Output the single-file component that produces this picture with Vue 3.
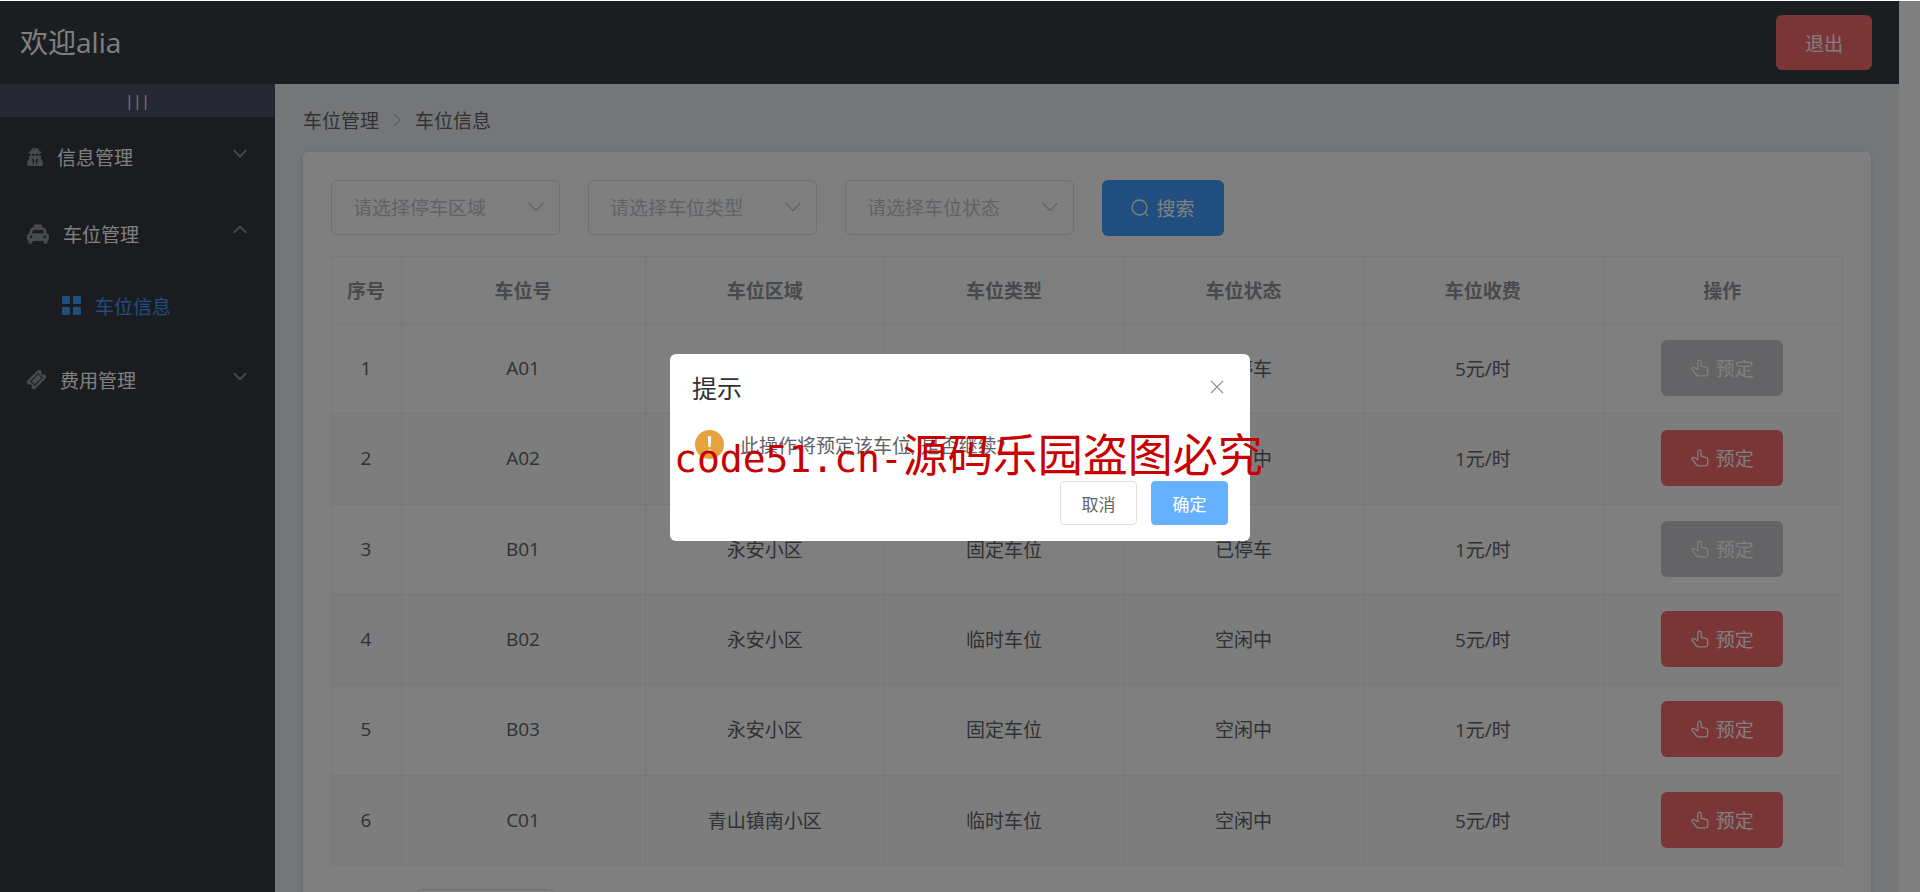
<script setup>
import { ref } from 'vue'

const columns = ['序号', '车位号', '车位区域', '车位类型', '车位状态', '车位收费', '操作']
const rows = [
  { id: 1, no: 'A01', area: '永安小区', type: '固定车位', state: '已停车', fee: '5元/时' },
  { id: 2, no: 'A02', area: '永安小区', type: '临时车位', state: '空闲中', fee: '1元/时' },
  { id: 3, no: 'B01', area: '永安小区', type: '固定车位', state: '已停车', fee: '1元/时' },
  { id: 4, no: 'B02', area: '永安小区', type: '临时车位', state: '空闲中', fee: '5元/时' },
  { id: 5, no: 'B03', area: '永安小区', type: '固定车位', state: '空闲中', fee: '1元/时' },
  { id: 6, no: 'C01', area: '青山镇南小区', type: '临时车位', state: '空闲中', fee: '5元/时' },
]
const filters = [
  { key: 'area', label: '请选择停车区域' },
  { key: 'type', label: '请选择车位类型' },
  { key: 'state', label: '请选择车位状态' },
]
const open = ref(true)
const collapsed = ref(false)
</script>

<template>
  <div class="page">
    <div class="app">
      <header class="header">
        <span class="welcome">欢迎alia</span>
        <button class="btn danger logout" type="button">退出</button>
      </header>
      <div class="body">
        <aside class="side">
          <button class="toggle" type="button" @click="collapsed = !collapsed">|||</button>
          <nav class="menu">
            <a class="item" href="#">
              <svg class="mi" width="16" height="18" viewBox="0 0 448 512" fill="currentColor">
                <path d="M383.900 308.300l23.900-62.600c4-10.500-3.700-21.700-15-21.700h-58.500c11-18.900 17.800-40.600 17.800-64v-.3c39.200-7.800 64-19.100 64-31.700 0-13.300-27.300-25.100-70.100-33-9.200-32.800-27-65.800-40.600-82.800-9.500-11.900-25.900-15.600-39.500-8.800l-27.600 13.800c-9 4.500-19.600 4.500-28.600 0L182.100 3.400c-13.600-6.800-30-3.100-39.500 8.800-13.500 17-31.400 50-40.600 82.800-42.700 7.900-70 19.700-70 33 0 12.600 24.800 23.900 64 31.700v.3c0 23.400 6.800 45.100 17.800 64H56.300c-11.500 0-19.200 11.700-14.700 22.300l25.800 60.200C27.300 329.800 0 372.700 0 422.400v44.800C0 491.900 20.100 512 44.800 512h358.400c24.700 0 44.800-20.100 44.800-44.800v-44.800c0-48.400-25.800-90.400-64.100-114.100zM176 480l-41.600-192 49.600 32 24 40-32 120zm96 0l-32-120 24-40 49.600-32L272 480zm41.700-298.500c-3.900 11.900-7 24.600-16.500 33.400-10.100 9.300-48 22.400-64-25-2.800-8.400-15.400-8.400-18.300 0-17 50.200-56 32.400-64 25-9.500-8.800-12.700-21.500-16.500-33.400-.8-2.500-6.300-5.700-6.300-5.800v-10.800c28.300 3.600 61 5.800 96 5.800s67.700-2.100 96-5.800v10.800c-.1.100-5.600 3.200-6.400 5.800z" />
              </svg>
              <span>信息管理</span>
              <svg class="arrow" viewBox="0 0 14 14"><path d="M1.500 4.500 7 10l5.500-5.500" /></svg>
            </a>
            <a class="item" href="#">
              <svg class="mi" width="22" height="22" viewBox="0 0 512 512" fill="currentColor">
                <path d="M462 241.640l-22-84.840c-9.600-35.200-41.600-60.800-76.800-60.800H352V64c0-17.670-14.330-32-32-32H192c-17.670 0-32 14.330-32 32v32h-11.200c-35.200 0-67.200 25.600-76.800 60.800l-22 84.840C21.410 248.040 0 273.470 0 304v48c0 23.630 12.950 44.040 32 55.120V448c0 17.670 14.330 32 32 32h32c17.670 0 32-14.330 32-32v-32h256v32c0 17.670 14.330 32 32 32h32c17.670 0 32-14.330 32-32v-40.880c19.050-11.090 32-31.500 32-55.120v-48c0-30.530-21.410-55.960-50-62.360zM96 352c-17.670 0-32-14.330-32-32s14.330-32 32-32 32 14.330 32 32-14.330 32-32 32zm20.550-112l17.200-66.360c2.230-8.160 9.590-13.640 15.060-13.640h214.400c5.470 0 12.830 5.480 14.850 12.860L395.480 240H116.550zM416 352c-17.670 0-32-14.330-32-32s14.330-32 32-32 32 14.330 32 32-14.330 32-32 32z" />
              </svg>
              <span>车位管理</span>
              <svg class="arrow" viewBox="0 0 14 14"><path d="M1.500 9.500 7 4l5.500 5.500" /></svg>
            </a>
            <a class="item sub" href="#">
              <svg class="mi" width="19" height="19" viewBox="0 0 19 19" fill="currentColor">
                <rect width="8" height="8" rx="1" /><rect x="11" width="8" height="8" rx="1" />
                <rect y="11" width="8" height="8" rx="1" /><rect x="11" y="11" width="8" height="8" rx="1" />
              </svg>
              <span>车位信息</span>
            </a>
            <a class="item" href="#">
              <svg class="mi" width="19" height="19" viewBox="0 0 20 20">
                <g transform="rotate(-45 10 10)">
                  <path fill="currentColor" fill-rule="evenodd" d="M0 4h20v4a2 2 0 0 0 0 4v4H0v-4a2 2 0 0 0 0-4zM4 6.500v7h12v-7zM5 7.500h10v5H5z" />
                </g>
              </svg>
              <span>费用管理</span>
              <svg class="arrow" viewBox="0 0 14 14"><path d="M1.500 4.500 7 10l5.500-5.500" /></svg>
            </a>
          </nav>
        </aside>
        <main class="main">
          <nav class="crumbs">
            <a href="#">车位管理</a>
            <svg viewBox="0 0 10 16"><path d="M2 2l6 6-6 6" /></svg>
            <span>车位信息</span>
          </nav>
          <section class="card">
            <div class="filters">
              <div v-for="f in filters" :key="f.key" class="pick">
                <select :aria-label="f.label"><option>{{ f.label }}</option></select>
                <svg viewBox="0 0 14 14"><path d="M.5 3.500 7 10l6.500-6.500" /></svg>
              </div>
              <button class="btn primary" type="button">
                <svg viewBox="0 0 18 18"><circle cx="8.500" cy="8.500" r="7.500" /><path d="M14 14l3 3" /></svg>
                搜索
              </button>
            </div>
            <table>
              <colgroup>
                <col class="c-id" /><col class="c-no" /><col span="5" />
              </colgroup>
              <thead>
                <tr><th v-for="c in columns" :key="c">{{ c }}</th></tr>
              </thead>
              <tbody>
                <tr v-for="r in rows" :key="r.id">
                  <td>{{ r.id }}</td>
                  <td>{{ r.no }}</td>
                  <td>{{ r.area }}</td>
                  <td>{{ r.type }}</td>
                  <td>{{ r.state }}</td>
                  <td>{{ r.fee }}</td>
                  <td>
                    <button class="btn" :class="r.state === '已停车' ? 'off' : 'danger'" :disabled="r.state === '已停车'" type="button">
                      <svg viewBox="0 0 18 18"><path d="M6.800 11V2.800a1.700 1.700 0 0 1 3.400 0v4.400l4.800 1.100a2 2 0 0 1 1.700 2v4.200a2.300 2.300 0 0 1-2.300 2.300H8.200a4 4 0 0 1-3-1.300L1.300 10.600a1.300 1.300 0 0 1 .3-2 1.800 1.800 0 0 1 2 .1L6.800 11" /></svg>
                      预定
                    </button>
                  </td>
                </tr>
              </tbody>
            </table>
            <div class="pager"><select aria-label="每页条数"></select></div>
          </section>
        </main>
      </div>
    </div>
    <div class="mask" v-if="open">
      <div class="dialog" role="dialog" aria-labelledby="dlg-title">
        <div class="dhead">
          <h2 id="dlg-title">提示</h2>
          <button class="close" type="button" aria-label="关闭" @click="open = false">
            <svg viewBox="0 0 14 14"><path d="M1 1l12 12M13 1 1 13" /></svg>
          </button>
        </div>
        <div class="dbody">
          <svg viewBox="0 0 30 30">
            <circle cx="15" cy="15" r="15" fill="#e6a23c" />
            <path fill="#fff" d="M13.200 6.500h3.600l-.7 11h-2.200z" /><circle cx="15" cy="21.500" r="1.700" fill="#fff" />
          </svg>
          <p>此操作将预定该车位, 是否继续?</p>
        </div>
        <div class="dfoot">
          <button type="button" @click="open = false">取消</button>
          <button class="ok" type="button" @click="open = false">确定</button>
        </div>
      </div>
    </div>
    <div class="watermark"><span>code51.cn-</span>源码乐园盗图必究</div>
  </div>
</template>

<style>
body { overflow: hidden; }
</style>

<style scoped>
* { box-sizing: border-box; }
.page {
  position: relative;
  height: 100vh;
  overflow: hidden;
  background: #fff;
  font-family: "Open Sans", "Noto Sans CJK SC", sans-serif;
  font-size: 19px;
  color: #606266;
}
svg { flex: none; fill: none; stroke: none; }
a { color: inherit; text-decoration: none; }
button, select { font: inherit; cursor: pointer; }
.app { display: flex; flex-direction: column; height: 100%; margin-right: 21px; padding-top: 1px; }
.header {
  flex: none;
  display: flex;
  align-items: center;
  justify-content: space-between;
  height: 83px;
  padding: 0 27px 0 20px;
  background: #373d41;
  color: #fff;
}
.welcome { padding-bottom: 3px; font-size: 28px; }
.body { flex: 1; display: flex; min-height: 0; }
.side { flex: none; width: 275px; background: #373941; color: #fff; }
.toggle {
  display: block;
  width: 100%;
  height: 33px;
  padding: 0;
  border: 0;
  background: #4a5064;
  color: #fff;
  font-family: "Open Sans", sans-serif;
  font-size: 15px;
  line-height: 33px;
}
.item { display: flex; align-items: center; gap: 14px; height: 77px; padding: 2px 27px 0; }
.mi { color: #909399; fill: currentColor; }
.item.sub { height: 69px; padding: 0 27px 0 62px; color: #409eff; }
.item.sub .mi { color: #409eff; }
.arrow { width: 16px; height: 16px; margin: 0 0 8px auto; stroke: #909399; stroke-width: 1.500; }
.main { flex: 1; min-width: 0; overflow: hidden; padding: 21px 28px 0; background: #eaedf1; }
.crumbs { display: flex; align-items: center; gap: 12px; height: 30px; margin-bottom: 17px; }
.crumbs svg { width: 12px; height: 16px; stroke: #c0c4cc; stroke-width: 1.500; }
.card {
  padding: 28px 28px 60px;
  border-radius: 5px;
  background: #fff;
  box-shadow: 0 1px 4px rgba(0, 0, 0, 0.15);
}
.filters { display: flex; gap: 28px; height: 56px; margin-bottom: 20px; }
.pick { position: relative; width: 229px; height: 55px; }
.pick select {
  appearance: none;
  width: 100%;
  height: 100%;
  padding: 0 21px;
  border: 1px solid #dcdfe6;
  border-radius: 6px;
  background: #fff;
  color: #c0c4cc;
}
.pick svg { position: absolute; right: 16px; top: 19px; width: 16px; height: 16px; stroke: #c0c4cc; stroke-width: 1.200; pointer-events: none; }
.btn {
  display: inline-flex;
  align-items: center;
  justify-content: center;
  gap: 7px;
  width: 122px;
  height: 56px;
  padding: 0;
  border: 0;
  border-radius: 6px;
  color: #fff;
  vertical-align: middle;
}
.btn svg { width: 18px; height: 18px; stroke: currentColor; stroke-width: 1.300; }
.btn.primary { background: #409eff; }
.btn.danger { background: #f56c6c; }
.btn.off { background: #c8c9cc; }
.btn.logout { width: 96px; height: 55px; }
table {
  width: 100%;
  height: 610px;
  table-layout: fixed;
  border-collapse: collapse;
  text-align: center;
}
.c-id { width: 70px; }
.c-no { width: 244px; }
th, td { padding: 0 1px 1px 0; border: 1px solid #ebeef5; }
th { height: 67px; color: #909399; font-weight: 700; }
tbody tr:nth-child(even) { background: #fafafa; }
.pager { padding: 23px 0 0 86px; }
.pager select { appearance: none; width: 136px; height: 39px; border: 1px solid #dcdfe6; border-radius: 4px; background: #fff; }
.mask {
  position: absolute;
  inset: 1px 0 0;
  display: flex;
  align-items: center;
  justify-content: center;
  padding-top: 2px;
  background: rgba(0, 0, 0, 0.5);
}
.dialog { width: 580px; padding: 18px 22px 16px; border-radius: 6px; background: #fff; }
.dhead { display: flex; align-items: center; justify-content: space-between; height: 30px; }
.dhead h2 { margin: 0; color: #303133; font-size: 25px; font-weight: 400; }
.close { display: flex; padding: 0 4px; border: 0; background: none; }
.close svg { width: 14px; height: 14px; stroke: #909399; stroke-width: 1.200; }
.dbody { display: flex; align-items: center; gap: 16px; height: 45px; margin: 20px 0 14px; padding-left: 3px; }
.dbody svg { width: 29px; height: 29px; }
.dbody p { margin: 0; }
.dfoot { display: flex; justify-content: flex-end; gap: 14px; }
.dfoot button { width: 77px; height: 44px; padding: 0; border: 1px solid #dcdfe6; border-radius: 4px; background: #fff; color: #606266; font-size: 17px; }
.dfoot .ok { border-color: #66b1ff; background: #66b1ff; color: #fff; }
.watermark {
  position: absolute;
  left: 674px;
  top: 423px;
  color: #c80000;
  font-family: "Noto Sans CJK SC", sans-serif;
  font-size: 45px;
  line-height: 60px;
  white-space: nowrap;
  pointer-events: none;
}
.watermark span { font-family: "DejaVu Sans Mono", monospace; font-size: 38px; }
</style>
